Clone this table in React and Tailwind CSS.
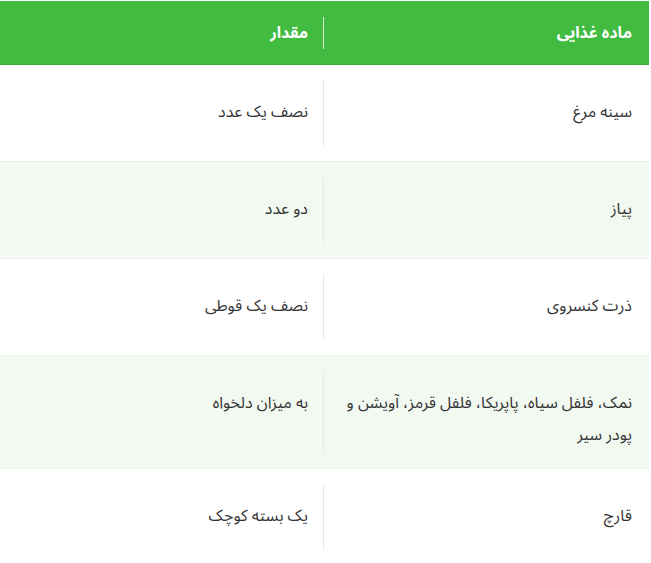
const rows = [
  { name: "سینه مرغ", amount: "نصف یک عدد" },
  { name: "پیاز", amount: "دو عدد" },
  { name: "ذرت کنسروی", amount: "نصف یک قوطی" },
  { name: "نمک، فلفل سیاه، پاپریکا، فلفل قرمز، آویشن و پودر سیر", amount: "به میزان دلخواه" },
  { name: "قارچ", amount: "یک بسته کوچک" },
]

export default function App() {
  return (
    <div
      dir="rtl"
      className="w-[651px] h-[563px] overflow-hidden bg-white pt-px pr-[2px]"
      style={{ fontFamily: '"Noto Sans Arabic", "DejaVu Sans", sans-serif' }}
    >
      <div className="flex bg-[#41bc41] text-white font-bold text-[16px] h-[64px] items-center border-b border-[#3aa93a]">
        <div className="w-[326px] h-[32px] flex items-center pr-[17px] border-l border-white/80">ماده غذایی</div>
        <div className="flex-1 pr-[15px]">مقدار</div>
      </div>
      {rows.map((r, i) => (
        <div
          key={i}
          className={`flex items-start py-[15px] border-b border-[#ebefeb] text-[16px] text-[#333] leading-[32px] ${i % 2 ? "bg-[#f1f9f1]" : "bg-white"}`}
        >
          <div className="w-[326px] min-h-[66px] pt-[16px] pb-[2px] pr-[17px] pl-[10px] border-l border-[#e6eae6]">
            {r.name}
          </div>
          <div className="flex-1 pt-[16px] pr-[15px]">{r.amount}</div>
        </div>
      ))}
    </div>
  )
}
